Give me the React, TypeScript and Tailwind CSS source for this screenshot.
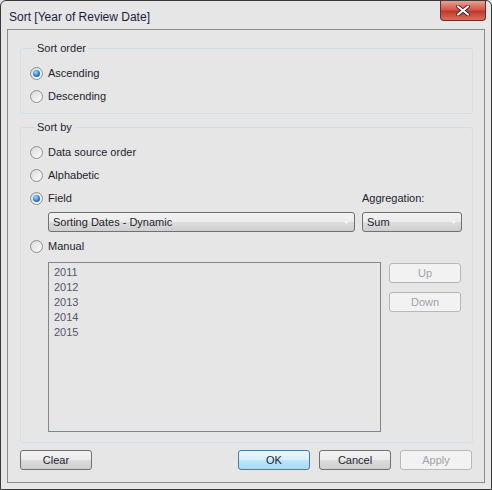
import type { ReactNode } from "react";

const btnBase =
  "h-[20px] w-[72px] rounded-[3px] border text-[11px] flex items-center justify-center";
const btnNormal =
  "border-[#707070] text-[#1e1e2e] bg-[linear-gradient(#f3f3f3_0%,#ebebeb_48%,#dcdcdc_52%,#cfcfcf_100%)]";
const btnDisabled = "border-[#b4b8bb] text-[#a2a2a8] bg-[#f2f2f2]";

function Radio({ label, checked = false }: { label: string; checked?: boolean }) {
  return (
    <div className="flex h-[23px] items-center gap-[5px]">
      <span className="flex h-[13px] w-[13px] items-center justify-center rounded-full border border-[#8e8f8f] bg-[linear-gradient(135deg,#d8d8d8,#ffffff)]">
        {checked && (
          <span className="h-[7px] w-[7px] rounded-full bg-[radial-gradient(circle_at_40%_35%,#a8dcff,#2a7fd4_55%,#0d3f80)]" />
        )}
      </span>
      <span>{label}</span>
    </div>
  );
}

function Combo({ value, className }: { value: string; className: string }) {
  return (
    <div
      className={`relative flex h-[20px] items-center rounded-[3px] border border-[#707070] pl-[4px] bg-[linear-gradient(#f3f3f3_0%,#ebebeb_48%,#dcdcdc_52%,#cfcfcf_100%)] ${className}`}
    >
      <span>{value}</span>
      <svg className="absolute right-[5px] top-[8px]" width="5" height="3" viewBox="0 0 5 3">
        <path d="M0 0h5L2.5 3z" fill="#f6f6f6" />
      </svg>
    </div>
  );
}

function Group({ title, children, className = "" }: { title: string; children: ReactNode; className?: string }) {
  return (
    <fieldset className={`mx-[12px] mr-[11px] rounded-[3px] border border-[#d5dfe5] pl-[9px] ${className}`}>
      <legend className="ml-[5px] px-[2px] leading-[13px]">{title}</legend>
      {children}
    </fieldset>
  );
}

export default function App() {
  return (
    <div className="h-[490px] w-[492px] overflow-hidden bg-[#e6e6e6] font-['Liberation_Sans',Arial,sans-serif] text-[11px] text-[#1e1e2e]">
      <div className="flex h-full flex-col rounded-t-[6px] border border-[#3a3a3a] px-[6px]">
        {/* title bar */}
        <div className="flex h-[28px] items-start justify-between">
          <span className="mt-[7px] ml-[2px] text-[12px] text-[#1b1b40]">Sort [Year of Review Date]</span>
          <div className="mr-[-1px] flex h-[20px] w-[46px] items-center justify-center rounded-b-[4px] border border-t-0 border-[#6e2a24] bg-[linear-gradient(#e8a194_0%,#d4574a_45%,#c03a2c_55%,#d9705c_100%)]">
            <svg width="14" height="11" viewBox="0 0 14 11">
              <path d="M2 1.5L12 9.5M12 1.5L2 9.5" stroke="#3d1a18" strokeWidth="3.6" strokeLinecap="round" />
              <path d="M2 1.5L12 9.5M12 1.5L2 9.5" stroke="#ffffff" strokeWidth="2.2" strokeLinecap="round" />
            </svg>
          </div>
        </div>

        {/* client area */}
        <div className="mb-[6px] flex flex-1 flex-col border border-[#8a8a8a] pt-[12px]">
          <Group title="Sort order" className="pt-[7px] pb-[5px]">
            <Radio label="Ascending" checked />
            <Radio label="Descending" />
          </Group>

          <Group title="Sort by" className="mt-[7px] pt-[7px] pb-[10px]">
            <Radio label="Data source order" />
            <Radio label="Alphabetic" />
            <div className="grid grid-cols-[325px_100px] gap-x-[7px]">
              <Radio label="Field" checked />
              <div className="flex h-[23px] items-center">Aggregation:</div>
              <Combo value="Sorting Dates - Dynamic" className="mt-[2px] ml-[18px]" />
              <Combo value="Sum" className="mt-[2px]" />
            </div>
            <div className="mt-[3px]">
              <Radio label="Manual" />
            </div>
            <div className="mt-[4px] ml-[18px] flex gap-[8px]">
              <div className="flex h-[170px] w-[333px] flex-col border border-[#82878f] pt-[2px] pl-[5px] text-[#55556a]">
                {["2011", "2012", "2013", "2014", "2015"].map((y) => (
                  <div key={y} className="flex h-[15px] items-center">
                    {y}
                  </div>
                ))}
              </div>
              <div className="flex flex-col gap-[9px] pt-[1px]">
                <div className={`${btnBase} ${btnDisabled}`}>Up</div>
                <div className={`${btnBase} ${btnDisabled}`}>Down</div>
              </div>
            </div>
          </Group>

          <div className="mt-[7px] flex gap-[9px] px-[12px]">
            <div className={`${btnBase} ${btnNormal}`}>Clear</div>
            <div className="flex-1" />
            <div className={`${btnBase} border-[#3c7fb1] text-[#1e1e2e] bg-[linear-gradient(#eaf6fd_0%,#d9f0fc_48%,#bee6fd_52%,#a7d9f5_100%)]`}>
              OK
            </div>
            <div className={`${btnBase} ${btnNormal}`}>Cancel</div>
            <div className={`${btnBase} ${btnDisabled}`}>Apply</div>
          </div>
        </div>
      </div>
    </div>
  );
}
